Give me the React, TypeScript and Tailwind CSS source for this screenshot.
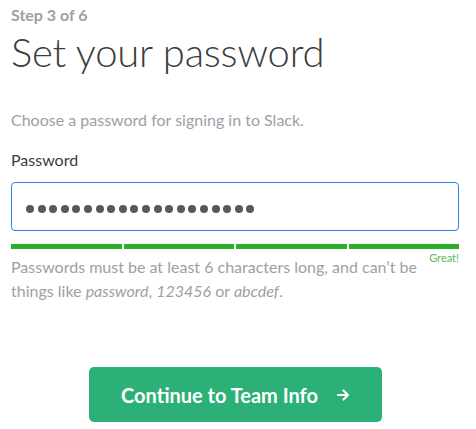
import React from 'react';

const App: React.FC = () => {
  const dots = Array.from({ length: 20 });

  return (
    <div className="min-h-screen bg-white font-['Lato',sans-serif] text-[#3d3c40]">
      <div className="w-[476px] px-[11px] pt-[6px]">
        {/* Step */}
        <p className="text-[16px] font-bold leading-[18px] text-[#9e9ea6]">Step 3 of 6</p>
        <h1 className="mt-[4px] text-[40px] font-light leading-[48px] tracking-[-0.2px]">Set your password</h1>

        <p className="mt-[32px] text-[16px] leading-[24px] text-[#9e9ea6]">
          Choose a password for signing in to Slack.
        </p>

        {/* Field */}
        <label className="mt-[16px] block text-[16px] leading-[24px]">Password</label>
        <div className="mt-[10px] flex h-[49px] w-[448px] items-center gap-[3.6px] rounded-[4px] border border-[#2780f8] px-[14px] pt-[4px]">
          {dots.map((_, i) => (
            <span key={i} className="h-[8px] w-[8px] rounded-full bg-[#58585c]" />
          ))}
        </div>

        {/* Strength meter */}
        <div className="mt-[13px] flex w-[448px] gap-[2px]">
          <div className="h-[5px] flex-1 bg-[#2ab027]" />
          <div className="h-[5px] flex-1 bg-[#2ab027]" />
          <div className="h-[5px] flex-1 bg-[#2ab027]" />
          <div className="h-[5px] flex-1 bg-[#2ab027]" />
        </div>
        <div className="relative w-[448px]">
          <span className="absolute right-0 top-[2px] text-[11px] leading-[14px] text-[#5bb84e]">Great!</span>
          <p className="w-[420px] pt-[6px] text-[16px] leading-[24px] text-[#9e9ea6]">
            Passwords must be at least 6 characters long, and can’t be things like{' '}
            <em>password</em>, <em>123456</em> or <em>abcdef</em>.
          </p>
        </div>

        {/* Action */}
        <div className="mt-[64px] flex">
          <button className="ml-[78px] flex h-[55px] w-[293px] items-center justify-center gap-[18px] rounded-[5px] bg-[#2bb077] text-[20px] font-bold text-white">
            <span>Continue to Team Info</span>
            <svg className="h-[14px] w-[14px]" viewBox="0 0 14 14" fill="none" stroke="currentColor" strokeWidth={2.2} strokeLinecap="round" strokeLinejoin="round">
              <path d="M2 7h10M7.5 2.5L12 7l-4.5 4.5" />
            </svg>
          </button>
        </div>
      </div>
    </div>
  );
};

export default App;
